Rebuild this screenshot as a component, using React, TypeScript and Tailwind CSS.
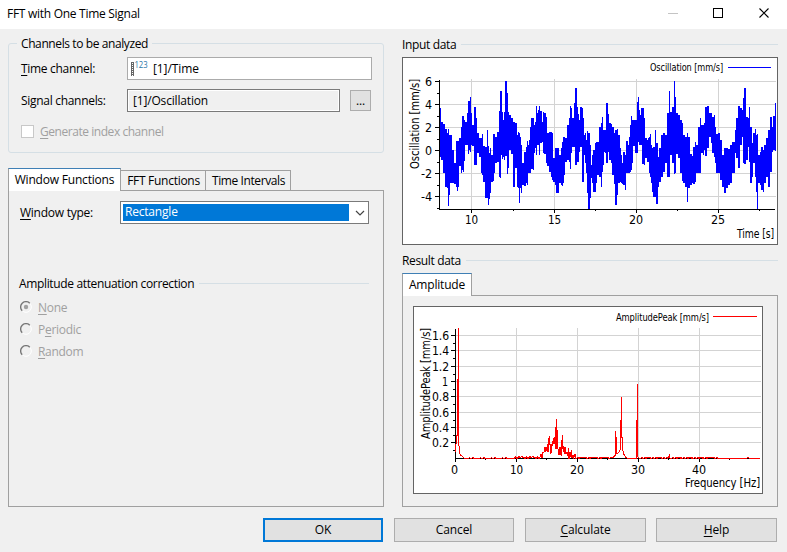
import type { ReactNode } from "react";

// Oscillation envelope: x, top, bottom per column, three units per pixel.
const envelopeA: number[] = [
  118,235,380,124,275,390,130,283,430,136,298,470,142,310,475,145,297,527,148,315,495,151,315,460,157,360,458,163,400,462,
  169,332,470,172,332,483,175,332,470,178,325,408,184,290,430,187,258,420,190,258,425,193,270,393,196,277,345,202,250,345,
  205,212,372,208,212,360,210,200,367,213,250,345,216,285,347,222,232,405,228,265,405,231,310,368,237,325,380,243,325,428,
  246,312,435,249,347,455,255,350,503,261,335,503,262,300,503,264,348,525,267,370,507,270,355,490,274,375,455,280,312,453,
  283,312,430,286,320,400,292,305,395,298,242,440,301,182,443,304,182,375,307,245,388,310,270,380,313,245,390,316,153,378,
  321,190,433,324,245,415,327,255,360,333,265,372,339,277,470,345,280,415,350,315,472,354,305,475,357,310,518,360,320,475,
  363,345,490,366,400,465,372,365,468,378,350,460,381,332,465,384,345,430,387,330,430,390,290,430,393,265,418,399,265,420,
  402,285,370,405,275,355,408,228,375,411,250,345,414,240,345,417,228,375,420,242,340,426,275,335,429,246,370,432,250,372,
  438,260,400,441,310,408,447,305,425,453,305,440,457,310,450,460,385,455,466,355,465,469,353,490,475,355,490,478,375,460,
  484,355,465,487,335,468,490,320,460,493,320,435,496,325,395,502,285,390,508,265,395,511,228,418,514,235,370,517,265,350,
  523,220,350,526,174,405,531,232,395,534,253,395,537,270,365,540,230,350,546,235,455,549,265,455,552,315,375,555,310,400,
  558,330,430,561,303,490,564,310,538,570,345,505,573,405,445,
];
const envelopeB: number[] = [
  6,375,460,9,360,485,15,340,487,18,335,460,21,335,435,27,290,440,33,278,470,36,262,425,39,300,405,42,300,365,46,300,370,
  48,220,400,54,252,365,57,278,390,63,282,400,66,292,435,72,310,463,76,300,525,81,297,495,84,315,460,90,355,455,93,375,460,
  96,400,463,99,365,465,105,375,480,108,333,430,114,345,428,117,320,430,120,285,425,123,258,420,126,270,400,129,270,348,
  135,270,370,141,215,370,144,202,335,147,240,345,150,255,345,153,235,345,156,235,403,162,265,405,165,325,385,171,330,395,
  174,325,395,177,320,430,180,312,440,183,345,460,186,355,485,190,350,502,195,300,500,199,340,523,204,380,470,208,355,455,
  213,315,440,219,310,425,225,315,400,231,250,440,237,184,442,240,245,375,246,232,400,251,153,433,255,200,430,258,248,373,
  264,255,385,270,270,430,276,280,453,279,315,460,285,320,470,291,310,517,295,322,473,300,373,465,306,378,460,309,350,463,
  315,337,455,318,345,430,324,290,430,330,265,430,333,285,370,339,285,375,342,280,360,345,232,378,351,228,355,356,248,320,
  363,248,340,366,260,370,372,255,380,375,290,400,378,312,430,384,308,430,390,330,450,396,375,472,402,355,490,408,355,475,
  414,358,465,420,345,460,426,335,430,434,300,370,438,265,385,444,228,415,450,235,345,456,240,320,459,205,400,463,174,402,
  468,260,390,474,265,350,477,232,395,480,290,458,487,340,440,490,310,400,495,298,440,498,315,485,501,313,538,505,375,460,
  510,365,465,513,350,480,519,360,485,522,345,460,528,325,440,534,300,470,540,262,425,546,290,365,549,258,360,555,220,362,
  558,220,362,
];

function toColumns(data: number[], shift: number): number[][] {
  const out: number[][] = [];
  for (let i = 0; i < data.length; i += 3) {
    out.push([Math.round(data[i] / 3) + shift, Math.round(data[i + 1] / 3) - 28, Math.round(data[i + 2] / 3) - 28]);
  }
  return out;
}

const columns = [...toColumns(envelopeA, -3), ...toColumns(envelopeB, 187)];
const wave = columns
  .slice(0, -1)
  .map((c, i) => {
    const w = Math.max(1, columns[i + 1][0] - c[0]);
    return `M${c[0]} ${c[1]}h${w}V${c[2]}h${-w}z`;
  })
  .join("");

// Small ripple along the base line of the spectrum.
function ripple(from: number, to: number, amp: number): string {
  let s = "";
  for (let x = from, i = 0; x < to; x += 1, i++) {
    s += `L${x} ${(152.2 - amp * (((i * 37) % 11) / 11)).toFixed(1)}`;
  }
  return s;
}

// Resonance group between 14 and 20 Hz, three units per pixel.
const group: number[] = [
  424,625,426,638,428,622,432,622,433,606,436,620,438,605,441,617,442,595,444,620,446,583,448,571,450,600,451,625,453,595,
  455,622,457,586,459,597,461,578,463,596,465,575,466,612,467,570,469,522,470,610,472,553,474,612,476,628,478,604,480,630,
  482,605,484,632,485,600,487,568,488,600,490,620,492,603,494,625,496,605,498,627,500,622,503,632,505,608,507,640,509,620,
  511,635,514,615,516,638,519,628,521,637,525,627,527,636,
];
let groupPath = "";
for (let i = 0; i < group.length; i += 2) {
  groupPath += `L${(group[i] / 3 - 14).toFixed(1)} ${(group[i + 1] / 3 - 61).toFixed(1)}`;
}

const spectrum =
  "M41.5 146L42.5 130L43.5 128L43.5 73L44.5 73L44.5 22L44.5 139L45.5 140L45.5 147L47 149L50 151.5" +
  ripple(51, 100, 1) + ripple(100, 127, 2.6) + groupPath + ripple(162, 198, 2) +
  "L199 151.5L200.5 149.5L201.5 148.5L201.5 125L202.5 136L202.5 147L204.5 146.5L206 144L206.5 140L206.5 114L207.5 114L207.5 91L207.5 130L208.5 132L208.5 143L210 148L212 151L214 152L222.5 152L222.5 150L222.5 114L223.5 114L223.5 78L223.5 150L225 151.5" +
  ripple(226, 255, 1.5) + "L255.5 148L256 152" + ripple(257, 290, 1.4) + ripple(290, 304, 2) + "L304 152L332 152L334 151L336 152L346 152";

type LabelProps = { x: number; y: number; w: number; children: string; size?: number; end?: boolean };
function Label({ x, y, w, children, size = 12, end }: LabelProps) {
  return (
    <text x={x} y={y} fontSize={size} textLength={w} lengthAdjust="spacingAndGlyphs" textAnchor={end ? "end" : "start"}>
      {children}
    </text>
  );
}

const chartFont = "block overflow-visible font-['DejaVu_Sans_Condensed','DejaVu_Sans',sans-serif]";

function InputChart() {
  const ys = [24, 47, 70, 93, 116, 139];
  return (
    <svg width="374" height="186" className={chartFont}>
      <g stroke="#d3d3d3" shapeRendering="crispEdges">
        {ys.map((y) => <path key={y} d={`M37 ${y - 0.5}H373`} />)}
        {[68.5, 151.5, 233.5, 315.5].map((x) => <path key={x} d={`M${x} 21V151`} />)}
      </g>
      <path d={wave} fill="#0000ff" shapeRendering="crispEdges" />
      <g stroke="#000" shapeRendering="crispEdges">
        <path d="M36.5 22V152M36 151.5H372" />
        {ys.map((y) => <path key={y} d={`M32 ${y - 0.5}H37M34 ${y + 11}H37`} />)}
        {[68.5, 151.5, 233.5, 315.5].map((x) => <path key={x} d={`M${x} 151V155`} />)}
        {[110.5, 192.5, 274.5, 356.5].map((x) => <path key={x} d={`M${x} 151V153`} />)}
      </g>
      <Label x={22} y={28} w={7}>6</Label>
      <Label x={22} y={51} w={7}>4</Label>
      <Label x={22} y={74} w={7}>2</Label>
      <Label x={22} y={97} w={7}>0</Label>
      <Label x={18} y={120} w={11}>-2</Label>
      <Label x={18} y={143} w={11}>-4</Label>
      <Label x={62} y={166} w={13}>10</Label>
      <Label x={145} y={166} w={13}>15</Label>
      <Label x={226} y={166} w={14}>20</Label>
      <Label x={308} y={166} w={14}>25</Label>
      <Label x={371} y={180} w={37} end>Time [s]</Label>
      <Label x={247} y={13} w={73} size={10}>Oscillation [mm/s]</Label>
      <path d="M325 9.5H368" stroke="#0000ff" shapeRendering="crispEdges" />
      <g transform="translate(16 111) rotate(-90)"><Label x={0} y={0} w={90}>Oscillation [mm/s]</Label></g>
    </svg>
  );
}

function ResultChart() {
  const rows: [string, number][] = [
    ["1.6", 28.5], ["1.4", 43.5], ["1.2", 59.5], ["1", 74.5], ["0.8", 89.5], ["0.6", 105.5], ["0.4", 120.5], ["0.2", 135.5],
  ];
  return (
    <svg width="348" height="186" className={chartFont}>
      <g stroke="#d3d3d3" shapeRendering="crispEdges">
        {rows.map(([t, y]) => <path key={t} d={`M42 ${y}H347`} />)}
        {[102.5, 163.5, 224.5, 285.5].map((x) => <path key={x} d={`M${x} 21V151`} />)}
      </g>
      <g stroke="#000" shapeRendering="crispEdges">
        <path d="M41.5 22V152M41 151.5H346" />
        {rows.map(([t, y]) => <path key={t} d={`M37 ${y}H42M39 ${y + 8}H42`} />)}
        {[41.5, 102.5, 163.5, 224.5, 285.5].map((x) => <path key={x} d={`M${x} 151V155M${x + 30} 151V153`} />)}
      </g>
      <path d={spectrum} transform="translate(0 -0.6)" fill="none" stroke="#ff0000" shapeRendering="crispEdges" />
      {rows.map(([t, y]) => (
        <Label key={t} x={t === "1" ? 28 : 18} y={y + 4.5} w={t === "1" ? 6 : 17}>{t}</Label>
      ))}
      <Label x={37} y={167} w={7}>0</Label>
      <Label x={96} y={167} w={13}>10</Label>
      <Label x={156} y={167} w={14}>20</Label>
      <Label x={217} y={167} w={14}>30</Label>
      <Label x={278} y={167} w={14}>40</Label>
      <Label x={346} y={180} w={75} end>Frequency [Hz]</Label>
      <Label x={202} y={14} w={93} size={10}>AmplitudePeak [mm/s]</Label>
      <path d="M299 9.5H343" stroke="#ff0000" shapeRendering="crispEdges" />
      <g transform="translate(16 132) rotate(-90)"><Label x={0} y={0} w={111}>AmplitudePeak [mm/s]</Label></g>
    </svg>
  );
}

function U({ children }: { children: ReactNode }) {
  return <span className="underline underline-offset-2">{children}</span>;
}

function Section({ title }: { title: string }) {
  return (
    <div className="flex h-4 items-center gap-[5px]">
      <span className="pt-px tracking-[-0.35px]">{title}</span>
      <span className="h-px flex-1 bg-[#d5dfe5]" />
    </div>
  );
}

function Radio({ checked, children }: { checked?: boolean; children: ReactNode }) {
  return (
    <div className="flex h-[22px] items-center gap-[6px] text-[#a0a0a0]">
      <svg width="12" height="12" fill="none" className="mb-[2px]">
        <circle cx="6" cy="6" r="5.3" stroke="#fff" />
        <path d="M2.2 9.8A5.3 5.3 0 0 1 9.8 2.2" stroke="#777" strokeWidth="1.4" />
        {checked && <circle cx="6" cy="6" r="2.2" fill="#a0a0a0" />}
      </svg>
      <span className="tracking-[-0.3px]">{children}</span>
    </div>
  );
}

const button = "flex h-6 items-center justify-center border border-[#adadad] bg-[#e1e1e1]";

export default function App() {
  return (
    <div className="flex h-[552px] w-[787px] flex-col overflow-hidden whitespace-nowrap bg-[#f0f0f0] font-['Open_Sans','Noto_Sans',sans-serif] text-[12px] leading-4 tracking-[-0.1px] text-black">
      <header className="flex h-[29px] shrink-0 items-center justify-between bg-white pl-[7px] pr-[17px]">
        <span className="pb-[2px] tracking-[-0.28px]">FFT with One Time Signal</span>
        <svg width="102" height="12" fill="none" className="mb-[2px]">
          <path d="M0 5.5H10" stroke="#c4c4c4" />
          <rect x="45.5" y="0.5" width="9" height="9" stroke="#000" />
          <path d="M91.5 0.5L100.5 9.5M100.5 0.5L91.5 9.5" stroke="#000" strokeWidth="1.1" />
        </svg>
      </header>
      <main className="flex h-[478px] shrink-0 justify-between pl-2 pr-[9px] pt-[7px]">
        <section className="w-[376px]">
          <fieldset className="h-[117px] rounded-[3px] border border-[#d5dfe5] pl-3">
            <legend className="-ml-1 flex h-[15px] items-center px-1 pt-px tracking-[-0.4px]">Channels to be analyzed</legend>
            <div className="mt-[6px] flex h-[23px] items-center">
              <span className="w-[106px] pt-px tracking-[-0.3px]"><U>T</U>ime channel:</span>
              <div className="flex h-[23px] w-[245px] items-center border border-[#ababab] bg-white pl-[3px]">
                <svg width="19" height="17" className="mr-[3px] overflow-visible">
                  <rect x="0" y="2" width="3" height="14" fill="#666" />
                  <path d="M1.5 3V16" stroke="#fff" strokeDasharray="1 1" />
                  <text x="3.5" y="8" fontSize="9" fill="#2b76a8" textLength="13" lengthAdjust="spacingAndGlyphs">123</text>
                </svg>
                <span>[1]/Time</span>
              </div>
            </div>
            <div className="mt-[9px] flex h-[23px] items-center">
              <span className="w-[106px] pt-px tracking-[-0.3px]">Signal channels:</span>
              <div className="flex h-[23px] w-[213px] items-center border border-[#7a7a7a] p-0">
                <div className="flex h-full w-full items-center border border-white pl-1 tracking-[-0.17px]">[1]/Oscillation</div>
              </div>
              <div className="ml-[10px] flex h-[21px] w-[21px] items-center justify-center border border-[#adadad] bg-[#e1e1e1]">...</div>
            </div>
            <div className="mt-[12px] flex h-[15px] items-center gap-[6px] text-[#a0a0a0]">
              <span className="h-[13px] w-[13px] border border-[#c8c8c8] bg-white" />
              <span className="pt-px tracking-[-0.45px]"><U>G</U>enerate index channel</span>
            </div>
          </fieldset>
          <div className="mt-[15px] flex h-[23px] items-end">
            <div className="z-10 flex h-[23px] w-[113px] items-center justify-center border-x border-t border-[#a0a0a0] border-t-[#3f7fb5] bg-white pb-px tracking-[-0.2px]">Window Functions</div>
            <div className="-ml-px flex h-[21px] w-[86px] items-center justify-center border border-[#a0a0a0] pl-px pt-px tracking-[-0.28px]">FFT Functions</div>
            <div className="-ml-px flex h-[21px] w-[86px] items-center justify-center border border-[#a0a0a0] pl-px pt-px tracking-[-0.4px]">Time Intervals</div>
          </div>
          <div className="-mt-px h-[317px] border border-[#a0a0a0] pl-[10px] pt-[10px]">
            <div className="flex h-[23px] items-center">
              <span className="w-[101px] pl-px pt-px tracking-[-0.25px]"><U>W</U>indow type:</span>
              <div className="flex h-[23px] w-[249px] items-center border border-[#7a7a7a] bg-white pl-[2px]">
                <span className="h-[17px] w-[226px] bg-[#0078d7] pl-[2px] tracking-[-0.2px] text-white">Rectangle</span>
                <svg width="10" height="6" className="ml-[6px]" fill="none"><path d="M1 1L5 5L9 1" stroke="#444" strokeWidth="1.2" /></svg>
              </div>
            </div>
            <div className="mt-[51px] w-[350px]"><Section title="Amplitude attenuation correction" /></div>
            <div className="mt-[6px] pl-px">
              <Radio checked><U>N</U>one</Radio>
              <Radio>P<U>e</U>riodic</Radio>
              <Radio><U>R</U>andom</Radio>
            </div>
          </div>
        </section>
        <section className="w-[376px]">
          <Section title="Input data" />
          <div className="mt-[5px] h-[188px] border border-[#646464] bg-white"><InputChart /></div>
          <div className="mt-[7px]"><Section title="Result data" /></div>
          <div className="relative z-10 mt-[5px] flex h-[23px] w-[70px] items-center justify-center border-x border-t border-[#a0a0a0] border-t-[#3f7fb5] bg-white pb-px tracking-[-0.2px]">Amplitude</div>
          <div className="-mt-px h-[212px] border border-[#a0a0a0] pl-[10px] pt-[10px]">
            <div className="h-[188px] w-[350px] border border-[#646464] bg-white"><ResultChart /></div>
          </div>
        </section>
      </main>
      <footer className="flex pl-[263px] pt-[11px]">
        <div className="flex h-6 w-[120px] items-center justify-center border-2 border-[#0078d7] bg-[#e1e1e1]">OK</div>
        <div className={`${button} ml-[11px] w-[120px]`}>Cancel</div>
        <div className={`${button} ml-[11px] w-[121px]`}><span><U>C</U>alculate</span></div>
        <div className={`${button} ml-[10px] w-[121px]`}><span><U>H</U>elp</span></div>
      </footer>
    </div>
  );
}
